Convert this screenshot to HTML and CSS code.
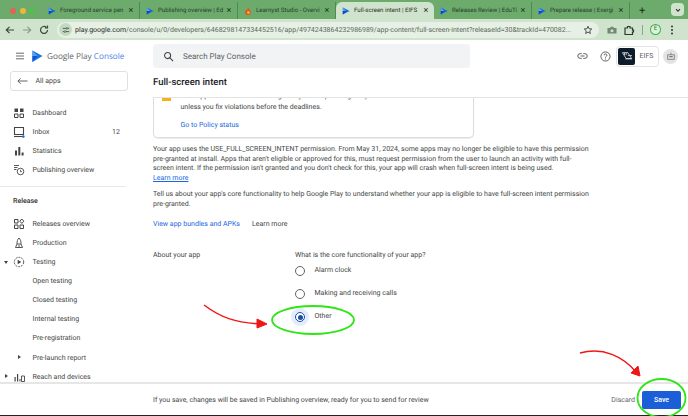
FILE: index.html
```html
<!DOCTYPE html>
<html lang="en">
<head>
  <meta charset="UTF-8">
  <meta name="viewport" content="width=device-width, initial-scale=1.0">
  <title>Full-screen intent | EIFS</title>
  <link rel="stylesheet" href="styles.css">
</head>
<body>
  <div class="tabstrip">
    <div class="lights"><span class="light red"></span><span class="light yellow"></span><span class="light green"></span></div>
    <div class="tab"><svg class="fav" viewBox="0 0 10 10"><use href="#play"/></svg><span class="tab-title">Foreground service pen</span><span class="tab-x">×</span></div>
    <div class="tab"><svg class="fav" viewBox="0 0 10 10"><use href="#play"/></svg><span class="tab-title">Publishing overview | Ed</span><span class="tab-x">×</span></div>
    <div class="tab"><svg class="fav" viewBox="0 0 10 10"><path d="M5 0.500C6 3 8.500 4 8.500 6.500A3.500 3.500 0 0 1 1.500 6.500C1.500 5 2.500 4 3 3C3.500 3.500 4 4 4 4.500C4.500 3.500 5 2 5 0.500Z" fill="#e8511f"/><circle cx="5.500" cy="7" r="1.600" fill="#fbc02d"/></svg><span class="tab-title">Learnyst Studio - Overvi</span><span class="tab-x">×</span></div>
    <div class="tab active"><svg class="fav" viewBox="0 0 10 10"><use href="#play"/></svg><span class="tab-title">Full-screen intent | EIFS</span><span class="tab-x">×</span></div>
    <div class="tab"><svg class="fav" viewBox="0 0 10 10"><use href="#play"/></svg><span class="tab-title">Releases Review | EduTi</span><span class="tab-x">×</span></div>
    <div class="tab"><svg class="fav" viewBox="0 0 10 10"><use href="#play"/></svg><span class="tab-title">Prepare release | Exergi</span><span class="tab-x">×</span></div>
    <span class="new-tab">+</span>
    <span class="tab-menu"><svg viewBox="0 0 10 10" width="8" height="8"><path d="M2.500 4L5 6.500L7.500 4" fill="none" stroke="#333" stroke-width="1.300"/></svg></span>
  </div>

  <div class="toolbar">
    <svg class="tool" viewBox="0 0 12 12"><path d="M10 6H2.500M5.500 2.800L2.300 6L5.500 9.200" fill="none" stroke="#3a4a3a" stroke-width="1.200"/></svg>
    <svg class="tool" viewBox="0 0 12 12"><path d="M2 6H9.500M6.500 2.800L9.700 6L6.500 9.200" fill="none" stroke="#84a084" stroke-width="1.200"/></svg>
    <svg class="tool" viewBox="0 0 12 12"><path d="M9.500 6A3.500 3.500 0 1 1 8.400 3.400M9.500 1.500V4H7" fill="none" stroke="#3a4a3a" stroke-width="1.200"/></svg>
    <div class="omnibox">
      <span class="site-chip"><svg viewBox="0 0 10 10" width="8" height="8"><path d="M1 3H5M7.500 3H9M1 7H2.500M5 7H9" stroke="#3a4a3a" stroke-width="1"/><circle cx="6.200" cy="3" r="1.100" fill="none" stroke="#3a4a3a" stroke-width=".8"/><circle cx="3.800" cy="7" r="1.100" fill="none" stroke="#3a4a3a" stroke-width=".8"/></svg></span>
      <span class="url"><b>play.google.com</b>/console/u/0/developers/6468298147334452516/app/4974243864232986989/app-content/full-screen-intent?releaseId=30&amp;trackId=470082...</span>
      <svg class="star" viewBox="0 0 12 12"><path d="M6 1.500L7.300 4.500L10.500 4.800L8.100 7L8.800 10.200L6 8.500L3.200 10.200L3.900 7L1.500 4.800L4.700 4.500Z" fill="none" stroke="#333" stroke-width="1"/></svg>
    </div>
    <svg class="tool" viewBox="0 0 12 12"><path d="M1.500 4H4L4.800 2.800H7.200L8 4H10.500V9.500H1.500Z" fill="#6f8a6f"/><circle cx="6" cy="6.700" r="1.500" fill="#cfe3cd"/></svg>
    <svg class="tool" viewBox="0 0 12 12"><path d="M2 4H4.500V2.500H7V4H9.500V6.200H10.500V8H9.500V10.500H2Z" fill="none" stroke="#2d3a2d" stroke-width="1.200"/></svg>
    <span class="tool-sep"></span>
    <span class="avatar">E</span>
    <svg class="tool" viewBox="0 0 12 12"><circle cx="6" cy="2.500" r="1" fill="#333"/><circle cx="6" cy="6" r="1" fill="#333"/><circle cx="6" cy="9.500" r="1" fill="#333"/></svg>
  </div>

  <header class="console-top">
    <div class="brand">
      <svg class="burger" viewBox="0 0 12 10"><path d="M1 1.500H11M1 5H11M1 8.500H11" stroke="#444" stroke-width="1"/></svg>
      <svg class="logo" viewBox="0 0 12 14"><path d="M0.500 0.500L11.500 6.500L0.500 13Z" fill="#1a73e8"/><path d="M0.500 6.500H6L0.500 13Z" fill="#0b57d0"/><path d="M0.500 0.500L6 6.500H0.500Z" fill="#5e9bf2"/></svg>
      <span class="brand-name">Google Play <em>Console</em></span>
    </div>
    <div class="search">
      <svg viewBox="0 0 12 12" width="11" height="11"><circle cx="5" cy="5" r="3.300" fill="none" stroke="#444" stroke-width="1.200"/><path d="M7.500 7.500L11 11" stroke="#444" stroke-width="1.200"/></svg>
      <span>Search Play Console</span>
    </div>
    <div class="top-actions">
      <svg class="link-ic" viewBox="0 0 14 10"><path d="M6 2H4A3 3 0 0 0 4 8H6M8 2H10A3 3 0 0 1 10 8H8M4.500 5H9.500" fill="none" stroke="#444" stroke-width="1.100"/></svg>
      <svg class="help-ic" viewBox="0 0 12 12"><circle cx="6" cy="6" r="5" fill="none" stroke="#444" stroke-width=".9"/><path d="M4.500 4.700A1.500 1.500 0 1 1 6.700 6C6.200 6.300 6 6.600 6 7.200" fill="none" stroke="#444" stroke-width=".9"/><circle cx="6" cy="8.800" r=".6" fill="#444"/></svg>
      <div class="dev-chip">
        <span class="dev-logo"><svg viewBox="0 0 14 12" width="12" height="10"><path d="M1.500 2H8L12.500 9H6Z M4 2V5M6 2V5M8 5.500H13" fill="none" stroke="#d8dde2" stroke-width="1"/><path d="M5 9.500H13" stroke="#d8dde2" stroke-width="1"/></svg></span>
        <span class="dev-name">EIFS</span>
      </div>
      <span class="bot"><svg viewBox="0 0 12 12" width="10" height="10"><path d="M2 4.500H10V10H2Z M6 4.500V2" fill="none" stroke="#777" stroke-width="1"/><rect x="4" y="6" width="4" height="1.500" fill="#777"/></svg></span>
    </div>
  </header>

  <div class="shell">
    <nav class="sidebar">
      <div class="all-apps">
        <svg viewBox="0 0 12 8" width="11" height="8"><path d="M11.500 4H1M4 1L1 4L4 7" fill="none" stroke="#555" stroke-width="1"/></svg>
        <span>All apps</span>
      </div>
      <ul class="nav-list first">
        <li><svg class="nav-ic" viewBox="0 0 12 12"><path d="M1.500 1.500H5V5H1.500Z M7 1.500H10.500V5H7Z" fill="#444"/><path d="M1.500 7H5V10.500H1.500Z M7 7H10.500V10.500H7Z" fill="none" stroke="#444"/></svg>Dashboard</li>
        <li><svg class="nav-ic" viewBox="0 0 12 12"><path d="M1.500 1.500H10.500V8.500H1.500Z" fill="none" stroke="#444" stroke-width="1.100"/><path d="M1 10.500H9" stroke="#444" stroke-width="1.100"/><circle cx="10.300" cy="10.500" r="1.300" fill="#1a5fd8"/></svg>Inbox<span class="count">12</span></li>
        <li><svg class="nav-ic" viewBox="0 0 12 12"><path d="M2 5.500H4V10.500H2Z M5.300 2H7.300V10.500H5.300Z M8.600 7.500H10.600V10.500H8.600Z" fill="#444"/></svg>Statistics</li>
        <li><svg class="nav-ic" viewBox="0 0 12 12"><path d="M1 1.500H6M1 3.500H4.500M1 5.500H3.500" stroke="#444" stroke-width=".9"/><circle cx="7.500" cy="7.500" r="3.300" fill="none" stroke="#444" stroke-width=".9"/><path d="M7.500 5.800V7.700H9" fill="none" stroke="#444" stroke-width=".8"/></svg>Publishing overview</li>
      </ul>
      <div class="nav-rule"></div>
      <div class="nav-heading">Release</div>
      <ul class="nav-list">
        <li><svg class="nav-ic" viewBox="0 0 12 12"><path d="M1.500 1.500H5V5H1.500Z M1.500 7H5V10.500H1.500Z M7 7H10.500V10.500H7Z M8.800 1L10.800 3.200L8.800 5.400L6.800 3.200Z" fill="none" stroke="#444"/></svg>Releases overview</li>
        <li><svg class="nav-ic" viewBox="0 0 12 12"><path d="M6 1C7.500 2.500 8 4 8 7H4C4 4 4.500 2.500 6 1Z M4 7L2.500 10.500H9.500L8 7M6 8V10.500" fill="none" stroke="#444" stroke-width=".9"/></svg>Production</li>
        <li><span class="caret down"></span><svg class="nav-ic" viewBox="0 0 12 12"><circle cx="6" cy="6" r="4.700" fill="none" stroke="#444" stroke-width=".9" stroke-dasharray="2 1"/><path d="M4.700 3.700L8.300 6L4.700 8.300Z" fill="#444"/></svg>Testing</li>
        <li>Open testing</li>
        <li>Closed testing</li>
        <li>Internal testing</li>
        <li>Pre-registration</li>
        <li><span class="caret sub"></span>Pre-launch report</li>
        <li><span class="caret"></span><svg class="nav-ic" viewBox="0 0 12 12"><path d="M1.500 6H2.700V10.500H1.500Z M4 3H5.200V10.500H4Z M6.500 8H7.500V10.500H6.500Z" fill="#444"/><path d="M8.500 5H11.500V10.500H8.500Z" fill="none" stroke="#444" stroke-width=".9"/></svg>Reach and devices</li>
      </ul>
    </nav>

    <main class="main">
      <h1>Full-screen intent</h1>
      <div class="scroller">
        <div class="policy-card">
          <span class="warn-mark"></span>
          <p class="cut">Your app doesn't adhere to Google Play Developer Program policies. We will take action</p>
          <p>unless you fix violations before the deadlines.</p>
          <a class="policy-link">Go to Policy status</a>
        </div>
        <div class="copy">
          <p>Your app uses the USE_FULL_SCREEN_INTENT permission. From May 31, 2024, some apps may no longer be eligible to have this permission pre-granted at install. Apps that aren't eligible or approved for this, must request permission from the user to launch an activity with full-screen intent. If the permission isn't granted and you don't check for this, your app will crash when full-screen intent is being used.<br><a class="learn">Learn more</a></p>
          <p>Tell us about your app's core functionality to help Google Play to understand whether your app is eligible to have full-screen intent permission pre-granted.</p>
        </div>
        <div class="links"><a>View app bundles and APKs</a><span>Learn more</span></div>
        <div class="about">
          <div class="about-label">About your app</div>
          <div class="about-form">
            <div class="question">What is the core functionality of your app?</div>
            <label class="option"><span class="radio"></span>Alarm clock</label>
            <label class="option"><span class="radio"></span>Making and receiving calls</label>
            <label class="option"><span class="radio on"></span>Other</label>
          </div>
        </div>
      </div>
    </main>
  </div>

  <footer class="savebar">
    <span>If you save, changes will be saved in Publishing overview, ready for you to send for review</span>
    <span class="discard">Discard</span>
    <button class="save">Save</button>
  </footer>

  <svg class="marks" viewBox="0 0 688 416" width="688" height="416">
    <ellipse cx="313" cy="320" rx="41" ry="14" fill="none" stroke="#2ee616" stroke-width="1.800"/>
    <ellipse cx="661.500" cy="398" rx="24" ry="19" fill="none" stroke="#2ee616" stroke-width="1.800"/>
    <path d="M204 305C220 317 235 323 262 324" fill="none" stroke="#f01616" stroke-width="1.500"/>
    <path d="M257 319L267 324L257 328Z" fill="#f01616" stroke="#f01616"/>
    <path d="M580 353C603 347 623 356 637 373" fill="none" stroke="#f01616" stroke-width="1.500"/>
    <path d="M631 373L640 376L638 366Z" fill="#f01616" stroke="#f01616"/>
  </svg>

  <svg class="defs" width="0" height="0"><defs><g id="play"><path d="M1 0.500L9.500 5L1 9.500Z" fill="#1a66e0"/><path d="M1 5H5.500L1 9.500Z" fill="#0b47b8"/><path d="M1 0.500L5 5H1Z" fill="#6aa2f5"/></g></defs></svg>
</body>
</html>
```

FILE: styles.css
```css
* {
  box-sizing: border-box;
}

html,
body {
  margin: 0;
  padding: 0;
  height: 100%;
}

body {
  position: relative;
  width: 688px;
  height: 416px;
  overflow: hidden;
  font-family: Roboto, Arial, sans-serif;
  font-size: 7px;
  color: #444746;
  background-color: #fff;
  display: flex;
  flex-direction: column;
  text-rendering: geometricPrecision;
}

ul {
  list-style: none;
  margin: 0;
  padding: 0;
}

p {
  margin: 0;
}

/* browser chrome */
.tabstrip {
  height: 19px;
  flex: none;
  background-color: #6cab6c;
  display: flex;
  align-items: flex-end;
  padding-left: 10px;
  position: relative;
}

.lights {
  width: 32px;
  height: 17px;
  display: flex;
  gap: 3.500px;
  align-items: center;
}

.light {
  width: 6px;
  height: 6px;
  border-radius: 50%;
}

.light.red { background-color: #ec5f56; }
.light.yellow { background-color: #f0b53a; }
.light.green { background-color: #4fc14b; }

.tab {
  width: 98px;
  height: 17px;
  display: flex;
  align-items: center;
  padding: 0 3px 0 6px;
  color: #25402a;
  font-size: 6.100px;
  border-right: 1px solid #4f8a50;
}

.tab.active {
  background-color: #cfe3cd;
  border-right: 0;
  border-radius: 6px 6px 0 0;
  color: #1f2f20;
}

.fav {
  width: 8px;
  height: 8px;
  flex: none;
  margin-right: 4px;
}

.tab-title {
  flex: 1;
  white-space: nowrap;
}

.tab-x {
  font-size: 9px;
  width: 10px;
  text-align: center;
  color: #1f2f20;
}

.new-tab {
  font-size: 11px;
  color: #1f2f20;
  height: 17px;
  line-height: 17px;
  margin-left: 9px;
}

.tab-menu {
  position: absolute;
  right: 4px;
  top: 3px;
  width: 13px;
  height: 13px;
  border-radius: 4px;
  background-color: #cfe3cd;
  display: flex;
  align-items: center;
  justify-content: center;
}

.toolbar {
  height: 21px;
  flex: none;
  background-color: #cfe3cd;
  display: flex;
  align-items: center;
  padding: 0 5px 0 4px;
}

.tool {
  width: 12px;
  height: 12px;
  flex: none;
  margin-right: 5px;
}

.omnibox {
  height: 16px;
  width: 547px;
  background-color: #e6f0e5;
  border-radius: 8px;
  display: flex;
  align-items: center;
  margin: 0 7px 0 2px;
  padding: 0 6px 0 2px;
}

.site-chip {
  width: 13px;
  height: 13px;
  border-radius: 50%;
  background-color: #c3d9c1;
  display: flex;
  align-items: center;
  justify-content: center;
  flex: none;
  margin-right: 3px;
}

.url {
  flex: 1;
  white-space: nowrap;
  color: #5a6a5a;
  font-size: 7px;
}

.url b {
  color: #1f2b1f;
  font-weight: 400;
}

.star {
  width: 10px;
  height: 10px;
  flex: none;
  margin-left: 4px;
}

.tool-sep {
  width: 1px;
  height: 10px;
  background-color: #8ba98a;
  margin: 0 7px 0 2px;
}

.avatar {
  width: 11px;
  height: 11px;
  border-radius: 50%;
  border: 1.500px solid #35b34a;
  background-color: #dff0dc;
  color: #1f7a30;
  font-size: 6px;
  text-align: center;
  line-height: 8px;
  margin-right: 5px;
}

/* console header */
.console-top {
  height: 32px;
  flex: none;
  display: flex;
  align-items: center;
}

.brand {
  width: 153px;
  display: flex;
  align-items: center;
  padding-left: 15px;
}

.burger {
  width: 10px;
  height: 8px;
  margin-right: 7px;
}

.logo {
  width: 11px;
  height: 13px;
  margin-right: 4px;
}

.brand-name {
  font-family: "Open Sans", Arial, sans-serif;
  font-size: 8.200px;
  color: #5f6368;
  white-space: nowrap;
}

.brand-name em {
  font-style: normal;
  color: #4a84e8;
}

.search {
  width: 317px;
  height: 24px;
  background-color: #f1f3f4;
  border-radius: 3px;
  display: flex;
  align-items: center;
  gap: 9px;
  padding-left: 10px;
  font-size: 8px;
  color: #5f6368;
}

.top-actions {
  flex: 1;
  display: flex;
  align-items: center;
  padding-left: 107px;
}

.link-ic {
  width: 11px;
  height: 8px;
  margin-right: 12px;
}

.help-ic {
  width: 11px;
  height: 11px;
  margin-right: 5px;
}

.dev-chip {
  width: 43px;
  height: 21px;
  flex: none;
  border: 1px solid #e3e3e3;
  border-radius: 4px;
  display: flex;
  align-items: center;
  margin-right: 4px;
}

.dev-logo {
  width: 17px;
  height: 17px;
  margin-left: 1px;
  background-color: #0d1b2a;
  border-radius: 2px;
  display: flex;
  align-items: center;
  justify-content: center;
}

.dev-name {
  flex: 1;
  text-align: center;
  font-size: 7px;
  color: #5f6368;
}

.bot {
  width: 15px;
  height: 15px;
  flex: none;
  border-radius: 50%;
  background-color: #e3e3e3;
  display: flex;
  align-items: center;
  justify-content: center;
}

/* body of the console */
.shell {
  flex: 1;
  min-height: 0;
  display: flex;
}

.sidebar {
  width: 153px;
  flex: none;
  font-size: 7px;
}

.all-apps {
  width: 118px;
  height: 20px;
  margin-left: 9.500px;
  margin-top: -1px;
  border: 1px solid #e0e0e0;
  border-radius: 3px;
  display: flex;
  align-items: center;
  padding-left: 6px;
  gap: 8px;
}

.nav-list li {
  position: relative;
  height: 19.100px;
  display: flex;
  align-items: center;
  padding-left: 32.500px;
  white-space: nowrap;
}

.nav-list.first {
  margin-top: 12px;
}

.nav-ic {
  position: absolute;
  left: 13px;
  top: 3.500px;
  width: 12px;
  height: 12px;
}

.count {
  position: absolute;
  left: 112px;
}

.caret {
  position: absolute;
  left: 5px;
  top: 7px;
  width: 0;
  height: 0;
  border-left: 3px solid #444;
  border-top: 2.500px solid transparent;
  border-bottom: 2.500px solid transparent;
}

.caret.down {
  left: 3.500px;
  top: 8px;
  border-top: 3px solid #444;
  border-left: 2.500px solid transparent;
  border-right: 2.500px solid transparent;
  border-bottom: 0;
}

.caret.sub {
  left: 18px;
}

.nav-rule {
  width: 126px;
  height: 1px;
  background-color: #e8e8e8;
  margin-top: 7px;
}

.nav-heading {
  font-weight: 500;
  color: #333;
  padding-left: 13px;
  margin: 10px 0 8px;
  line-height: 9px;
}

/* main column */
.main {
  flex: 1;
  min-width: 0;
  display: flex;
  flex-direction: column;
}

h1 {
  margin: 0;
  height: 25px;
  font-size: 9.500px;
  font-weight: 500;
  color: #202124;
  line-height: 22px;
  flex: none;
}

.scroller {
  flex: 1;
  min-height: 0;
  overflow: hidden;
  border-top: 1px solid #e3e3e3;
  font-size: 7px;
  line-height: 9.700px;
}

.policy-card {
  position: relative;
  width: 321px;
  height: 41px;
  margin-top: -1px;
  border: 1px solid #dadce0;
  border-top: 0;
  border-radius: 0 0 5px 5px;
  padding-left: 26.500px;
  box-shadow: 0 1px 1px rgba(0, 0, 0, 0.08);
  overflow: hidden;
}

.policy-card .cut {
  margin-top: -5px;
  margin-bottom: 1.500px;
  white-space: nowrap;
}

.warn-mark {
  position: absolute;
  left: 8px;
  top: 0;
  width: 9px;
  height: 4px;
  background-color: #f2b21c;
}

.policy-link {
  display: block;
  margin-top: 8px;
  color: #1a66e0;
}

.copy {
  width: 436px;
  margin-top: 7px;
}

.copy p {
  margin-bottom: 6px;
}

.learn {
  color: #1a66e0;
  text-decoration: underline;
}

.links {
  margin-top: 11px;
  display: flex;
  gap: 12px;
}

.links a {
  color: #1a66e0;
}

.about {
  display: flex;
  margin-top: 21px;
}

.about-label {
  width: 142px;
}

.question {
  margin-bottom: -1px;
}

.option {
  display: flex;
  align-items: center;
  height: 23px;
  gap: 9.500px;
}

.radio {
  position: relative;
  width: 10px;
  height: 10px;
  border: 1px solid #5f6368;
  border-radius: 50%;
}

.radio.on {
  border-color: #174ea6;
  box-shadow: 0 0 0 4px #e4ebfa;
}

.radio.on::after {
  content: "";
  position: absolute;
  left: 1.500px;
  top: 1.500px;
  width: 5px;
  height: 5px;
  border-radius: 50%;
  background-color: #174ea6;
}

/* save bar */
.savebar {
  height: 34px;
  flex: none;
  border-top: 2px solid #e6e6e6;
  display: flex;
  align-items: center;
  padding-left: 153px;
  padding-right: 7px;
  font-size: 7px;
  background-color: #fff;
  border-bottom: 1px solid #222;
}

.discard {
  margin-left: auto;
  margin-right: 7px;
  color: #5f6368;
}

.save {
  width: 39px;
  height: 18px;
  border: 0;
  border-radius: 2px;
  background-color: #1a5fd8;
  color: #fff;
  font-family: Roboto, Arial, sans-serif;
  font-size: 7px;
  font-weight: 500;
}

/* hand drawn annotations over the screenshot */
.marks {
  position: absolute;
  left: 0;
  top: 0;
  pointer-events: none;
}

.defs {
  position: absolute;
}
```
